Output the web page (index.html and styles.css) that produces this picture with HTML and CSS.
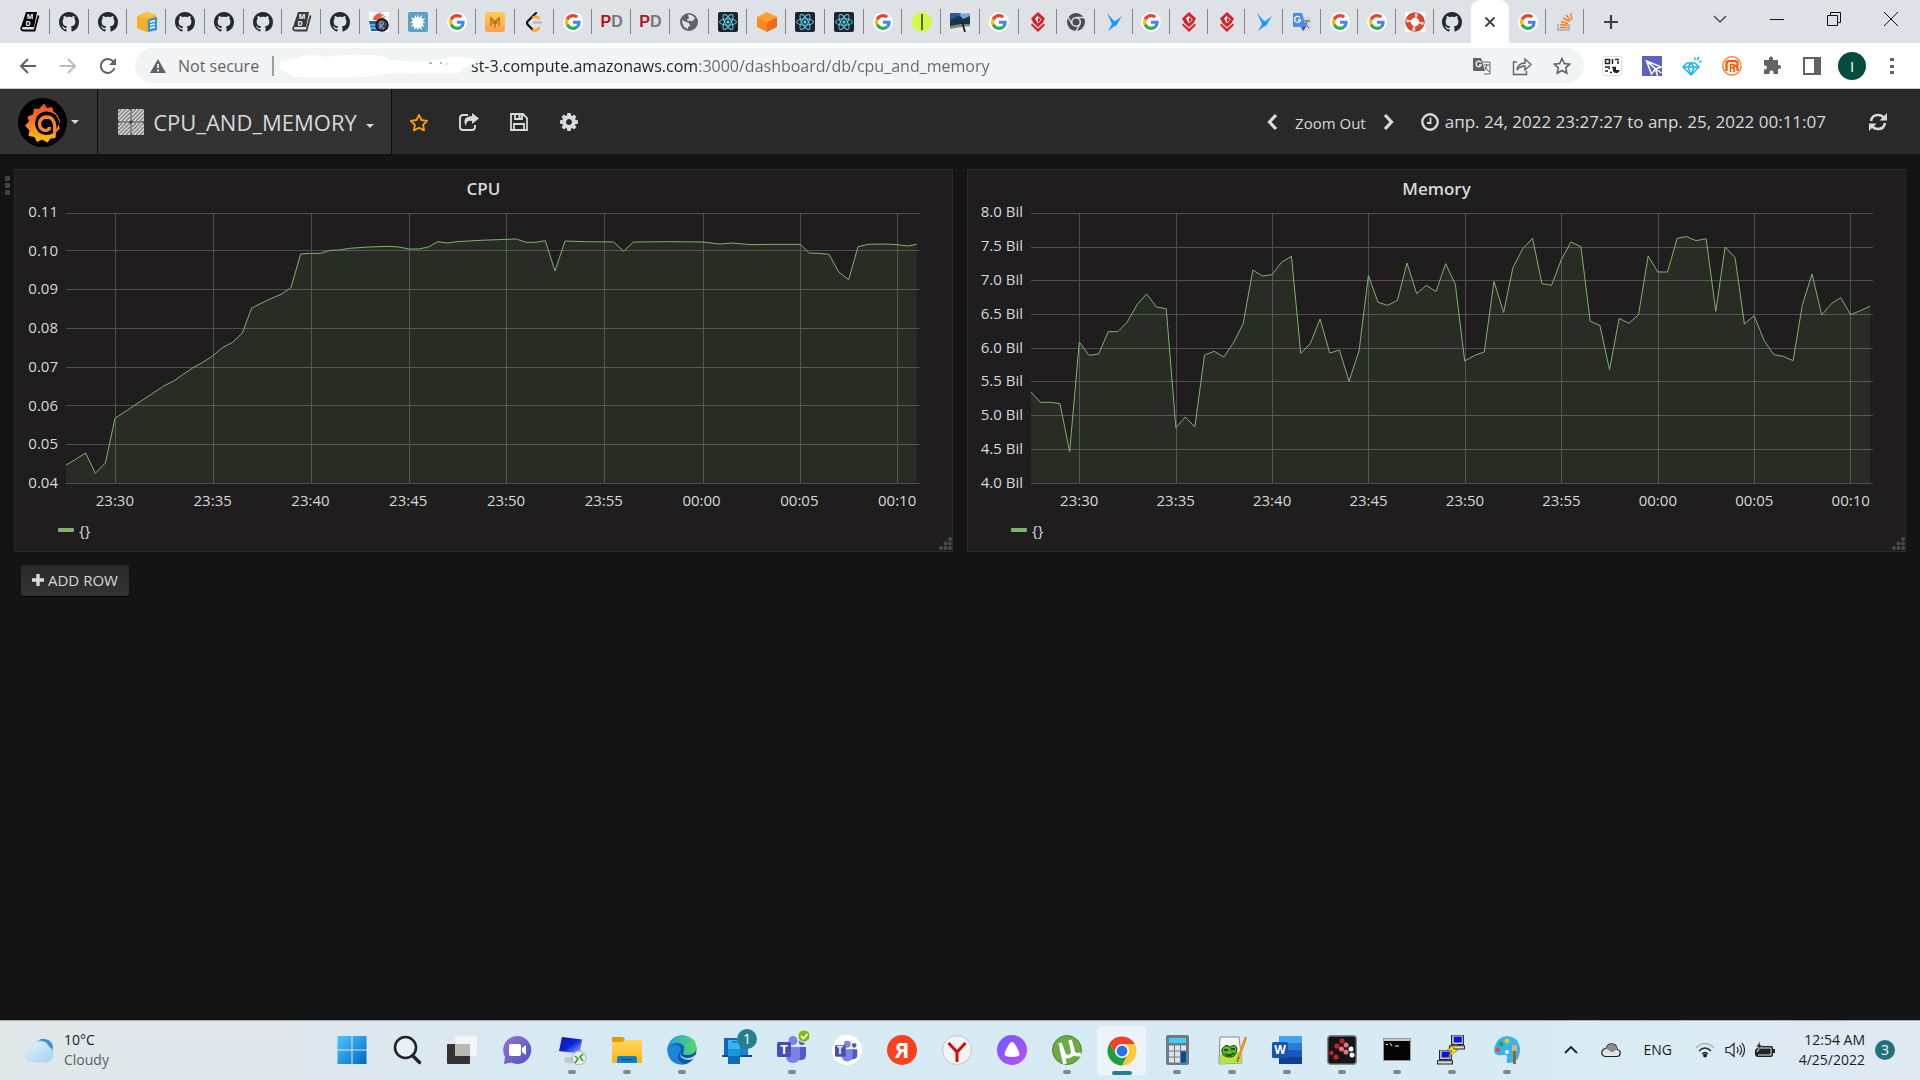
FILE: index.html
```html
<!DOCTYPE html>
<html lang="en">
<head>
<meta charset="utf-8">
<meta name="viewport" content="width=device-width, initial-scale=1">
<title>Grafana - CPU_AND_MEMORY</title>
<link rel="stylesheet" href="styles.css">
</head>
<body>
<svg class="defs" aria-hidden="true">
  <defs>
    <linearGradient id="g-logo" x1="0" y1="0" x2="0" y2="1"><stop offset="0" stop-color="#f0512a"/><stop offset=".45" stop-color="#f5752a"/><stop offset="1" stop-color="#fdc70c"/></linearGradient>
    <linearGradient id="g-m" x1="0" y1="0" x2="0" y2="1"><stop offset="0" stop-color="#fccf55"/><stop offset="1" stop-color="#fba04e"/></linearGradient>
    <linearGradient id="g-win" x1="0" y1="0" x2="1" y2="1"><stop offset="0" stop-color="#4cc8fb"/><stop offset="1" stop-color="#0267c4"/></linearGradient>
    <linearGradient id="g-chat" x1="0" y1="0" x2="1" y2="1"><stop offset="0" stop-color="#9a74c8"/><stop offset="1" stop-color="#4b52c4"/></linearGradient>
    <linearGradient id="g-alice" x1="0" y1="0" x2="1" y2="1"><stop offset="0" stop-color="#6a5cff"/><stop offset="1" stop-color="#c24cf6"/></linearGradient>
    <linearGradient id="g-edge" x1="0" y1="0" x2="1" y2="0"><stop offset="0" stop-color="#1da1e6"/><stop offset="1" stop-color="#58d860"/></linearGradient>
    <linearGradient id="g-screen" x1="0" y1="0" x2="1" y2="1"><stop offset="0" stop-color="#0a18a8"/><stop offset=".5" stop-color="#0a22d8"/><stop offset="1" stop-color="#9fc0ff"/></linearGradient>
    <linearGradient id="g-fold" x1="0" y1="0" x2="0" y2="1"><stop offset="0" stop-color="#ffd862"/><stop offset="1" stop-color="#f9b50c"/></linearGradient>
    <linearGradient id="g-cloud" x1="0" y1="0" x2="1" y2="1"><stop offset="0" stop-color="#e4f5fe"/><stop offset="1" stop-color="#9fd0f2"/></linearGradient>
  </defs>

  <symbol id="f-book" viewBox="0 0 20 20"><path d="M6 0h11l-3 15H1z" fill="currentColor"/><path d="M1.500 15q-1 3.500 2 3.500h11l4-15" fill="none" stroke="currentColor" stroke-width="1.800"/></symbol>
  <symbol id="f-gh" viewBox="0 0 16 16"><path fill="#24292f" d="M8 0C3.580 0 0 3.580 0 8c0 3.540 2.290 6.530 5.470 7.590.4.070.55-.17.55-.38 0-.19-.01-.82-.01-1.490-2.010.37-2.530-.49-2.690-.94-.09-.23-.48-.94-.82-1.130-.28-.15-.68-.52-.01-.53.63-.01 1.080.58 1.230.82.72 1.210 1.870.87 2.330.66.070-.52.28-.87.51-1.070-1.780-.2-3.640-.89-3.640-3.950 0-.87.31-1.590.82-2.150-.08-.2-.36-1.020.08-2.120 0 0 .67-.21 2.200.82.64-.18 1.320-.27 2-.27.68 0 1.360.09 2 .27 1.530-1.040 2.200-.82 2.200-.82.44 1.100.16 1.920.08 2.120.51.56.82 1.270.82 2.150 0 3.070-1.870 3.750-3.650 3.950.29.25.54.73.54 1.480 0 1.070-.01 1.930-.01 2.200 0 .21.15.46.55.38A8.013 8.013 0 0016 8c0-4.420-3.580-8-8-8z"/></symbol>
  <symbol id="f-g" viewBox="0 0 20 20"><circle cx="10" cy="10" r="10" fill="#fff"/><g transform="translate(2 2) scale(.3333)"><path fill="#EA4335" d="M24 9.500c3.540 0 6.710 1.220 9.210 3.600l6.850-6.850C35.900 2.380 30.470 0 24 0 14.620 0 6.510 5.380 2.560 13.220l7.980 6.190C12.430 13.720 17.740 9.500 24 9.500z"/><path fill="#4285F4" d="M46.980 24.550c0-1.570-.15-3.090-.38-4.550H24v9.020h12.940c-.58 2.960-2.260 5.480-4.780 7.180l7.730 6c4.510-4.180 7.090-10.360 7.090-17.650z"/><path fill="#FBBC05" d="M10.530 28.590c-.48-1.450-.76-2.990-.76-4.590s.27-3.140.76-4.590l-7.980-6.190C.92 16.460 0 20.120 0 24c0 3.880.92 7.540 2.560 10.780l7.970-6.190z"/><path fill="#34A853" d="M24 48c6.480 0 11.930-2.130 15.890-5.810l-7.730-6c-2.150 1.450-4.920 2.300-8.160 2.300-6.260 0-11.570-4.220-13.470-9.910l-7.980 6.190C6.510 42.620 14.620 48 24 48z"/></g></symbol>
  <symbol id="f-box" viewBox="0 0 20 20"><path d="M0 4l10-4 9 3v12l-9 5-10-4z" fill="#f2a51f"/><path d="M0 4l10 3 9-4-9-3z" fill="#fac345"/><path d="M0 4l10 3v13L0 16z" fill="#f5b02b"/><path d="M11 8l9-3v13l-9 2z" fill="#2f93e0"/><path d="M13 10l5-1.500M13 13l5-1M13 16l5-1" stroke="#fff" stroke-width="1.500"/></symbol>
  <symbol id="f-java" viewBox="0 0 20 20"><rect width="20" height="20" fill="#fff"/><path d="M0 9h10v10H2z" fill="#1565a8"/><path d="M1 13h6M1 16h8" stroke="#7cc4f4" stroke-width="1.500"/><path d="M4 8q0-5 8-8-2 4 3 2-1 3-6 4 4 0 8-2-3 5-13 4z" fill="#ee5b2b"/><circle cx="13" cy="13" r="6" fill="#33445f" stroke="#111" stroke-width="1.500"/><path d="M11 17v-7h2.500q2 1.500 0 3H11l4 4" fill="none" stroke="#8fa3bf" stroke-width="1.200"/></symbol>
  <symbol id="f-splat" viewBox="0 0 20 20"><rect width="20" height="20" rx="2" fill="#5ba0c2"/><path d="M10 2l1 4 3-3-.5 4 4-1-3 3 3 1.500-3 1 2 3.500-3-1 .5 4-3-2.500-1 3-1.500-3-2.500 2v-3.500l-3 1 2-3.500-3-1 3-1.500-2-3.500 3.500 1 .5-3.500 2 3z" fill="#fff"/></symbol>
  <symbol id="f-m" viewBox="0 0 20 20"><rect width="20" height="20" rx="3" fill="url(#g-m)"/><path d="M6 14V6l4 4 4-4v8M8.500 12V9M11.500 9v3M10 11v5" fill="none" stroke="#c26a10" stroke-width="1.400"/></symbol>
  <symbol id="f-leet" viewBox="0 0 20 20"><path d="M12 1L4 9q-2 2 0 4l5 5" fill="none" stroke="#111" stroke-width="2.200" stroke-linecap="round"/><path d="M9 10.500h9" stroke="#b3b3b3" stroke-width="2"/><path d="M9 5.500q3-2 6 1M9 18q3 2 6-2" fill="none" stroke="#ffa116" stroke-width="2.200" stroke-linecap="round"/></symbol>
  <symbol id="f-globe" viewBox="0 0 20 20"><circle cx="10" cy="10" r="9" fill="#5f6368"/><path d="M9 2.500q5 0 7 4l-3 3-2-1-2 1-1-2 2-1zM3 8l4 2 3 1 1 3-2 1v2Q3 15 3 8z" fill="#dee1e6"/></symbol>
  <symbol id="f-react" viewBox="0 0 20 20"><rect width="20" height="20" rx="2" fill="#20232a"/><g fill="none" stroke="#61dafb" stroke-width=".9"><ellipse cx="10" cy="10" rx="8.500" ry="3.200"/><ellipse cx="10" cy="10" rx="8.500" ry="3.200" transform="rotate(60 10 10)"/><ellipse cx="10" cy="10" rx="8.500" ry="3.200" transform="rotate(120 10 10)"/></g><circle cx="10" cy="10" r="1.600" fill="#61dafb"/></symbol>
  <symbol id="f-cube" viewBox="0 0 20 20"><path d="M10 0l10 5-10 5L0 5z" fill="#ff9d2e"/><path d="M0 5l10 5v10L0 15z" fill="#f78b1f"/><path d="M20 5l-10 5v10l10-5z" fill="#ee6b1e"/></symbol>
  <symbol id="f-ball" viewBox="0 0 20 20"><circle cx="10" cy="10" r="10" fill="#d2fa42"/><path d="M10 2v16" stroke="#3f5763" stroke-width="1.800"/></symbol>
  <symbol id="f-photo" viewBox="0 0 20 20"><rect width="20" height="20" fill="#e3e9ef"/><path d="M0 1h11v6L0 10z" fill="#2d5a9a"/><path d="M0 8l8-4 7 2 5-3v9l-8 2-12 1z" fill="#1c3350"/><path d="M9 2l11-1v3l-7 3z" fill="#7ea6cf"/><path d="M0 14l11-2 9 0v2l-9 1-11 2z" fill="#6d8f72"/><path d="M12 10l3 10" stroke="#222" stroke-width="1.800"/></symbol>
  <symbol id="f-dia" viewBox="0 0 20 20"><path d="M10 0l7 6.500-2 3.500 2 3-7 7-7-7 2-3-2-3.500z" fill="#d3222a"/><path d="M4 10.500l6 5.500 6-5.500" fill="none" stroke="#f3dfe2" stroke-width="1.200"/><path d="M7 6.500l3-3v8z" fill="#fff"/><path d="M10 5l3.500 2.500L10 11" fill="none" stroke="#f3dfe2"/></symbol>
  <symbol id="f-chr" viewBox="0 0 20 20"><circle cx="10" cy="10" r="9" fill="#4a4d51"/><circle cx="10" cy="10" r="4.300" fill="#4a4d51" stroke="#dee1e6" stroke-width="1.600"/><path d="M10 5.500h9M6 12L2 5M14 12l-4.500 8" stroke="#dee1e6" stroke-width="1.400"/></symbol>
  <symbol id="f-bird" viewBox="0 0 20 20"><path d="M3 1l7 8 1.500 0 6.500-5-4 6.500q-1 3.500-4 4l-6 4.500 4-7z" fill="#1e98ff"/></symbol>
  <symbol id="f-tr" viewBox="0 0 20 20"><path d="M8 5h11v14h-9z" fill="#d5d7da"/><path d="M1 1h9l4 14H1z" fill="#4a8af4"/><path d="M9 15h5l-3 4z" fill="#2a56c6"/><path d="M8 5.500A3 3 0 108.500 8H6" fill="none" stroke="#fff" stroke-width="1.300"/><path d="M12 9h6M15 8v1q0 4-2 6M13 11l4 5" stroke="#5c6470" fill="none"/></symbol>
  <symbol id="f-life" viewBox="0 0 20 20"><rect width="20" height="20" fill="#fff"/><circle cx="10" cy="10" r="6.800" fill="none" stroke="#f0d8d0" stroke-width="5"/><circle cx="10" cy="10" r="6.800" fill="none" stroke="#e2472e" stroke-width="5" stroke-dasharray="8 2.680" transform="rotate(20 10 10)"/><circle cx="10" cy="10" r="9.300" fill="none" stroke="#8c2c20" stroke-width=".7"/></symbol>
  <symbol id="f-so" viewBox="0 0 20 20"><path d="M3 12v6h11v-6" fill="none" stroke="#a9abae" stroke-width="1.600"/><path d="M5 15.500h7.500M5.200 12.500l7.500.8M6 9.500l7 2M8 6l6.500 3.500M11 3l4.500 5.500M15.500 1l1.500 6.500" stroke="#f48024" stroke-width="1.500"/></symbol>

  <symbol id="i-teams" viewBox="0 0 30 30"><circle cx="16" cy="5.500" r="4.500" fill="#7b83eb"/><circle cx="25" cy="7" r="3" fill="#5059c9"/><path d="M20 12h9v8q0 5-5 5h-4z" fill="#5059c9"/><path d="M9 12h14v9q0 7-7 7t-7-7z" fill="#7b83eb"/><rect y="7" width="14" height="15" rx="1.500" fill="#464eb8"/></symbol>
  <symbol id="i-monitor" viewBox="0 0 16 14"><path d="M2 0h11v9H2z" fill="#c9c9c9" stroke="#222"/><path d="M4 1.500h7.500v5.500H4z" fill="#0b11e8"/><path d="M0 10h14v3H0z" fill="#dcdcdc" stroke="#222"/></symbol>
</svg>

<header class="browser">
  <div class="tabstrip">
    <nav class="tabs" aria-label="Tabs">
      <div class="tab-group wide">
        <span class="tab"><svg class="fav" viewBox="0 0 20 20"><use href="#f-book"/><text x="10" y="7">M</text><text x="8" y="14">D</text></svg></span>
        <span class="tab"><svg class="fav"><use href="#f-gh"/></svg></span>
        <span class="tab"><svg class="fav"><use href="#f-gh"/></svg></span>
        <span class="tab"><svg class="fav"><use href="#f-box"/></svg></span>
        <span class="tab"><svg class="fav"><use href="#f-gh"/></svg></span>
        <span class="tab"><svg class="fav"><use href="#f-gh"/></svg></span>
        <span class="tab"><svg class="fav"><use href="#f-gh"/></svg></span>
        <span class="tab"><svg class="fav soft" viewBox="0 0 20 20"><use href="#f-book"/><text x="10" y="7">M</text><text x="8" y="14">D</text></svg></span>
        <span class="tab"><svg class="fav"><use href="#f-gh"/></svg></span>
        <span class="tab"><svg class="fav"><use href="#f-java"/></svg></span>
        <span class="tab"><svg class="fav"><use href="#f-splat"/></svg></span>
        <span class="tab"><svg class="fav"><use href="#f-g"/></svg></span>
        <span class="tab"><svg class="fav"><use href="#f-m"/></svg></span>
        <span class="tab"><svg class="fav"><use href="#f-leet"/></svg></span>
        <span class="tab"><svg class="fav"><use href="#f-g"/></svg></span>
        <span class="tab pd"><b>P</b>D</span>
        <span class="tab pd"><b>P</b>D</span>
        <span class="tab"><svg class="fav"><use href="#f-globe"/></svg></span>
        <span class="tab"><svg class="fav"><use href="#f-react"/></svg></span>
        <span class="tab"><svg class="fav"><use href="#f-cube"/></svg></span>
        <span class="tab"><svg class="fav"><use href="#f-react"/></svg></span>
        <span class="tab"><svg class="fav"><use href="#f-react"/></svg></span>
        <span class="tab"><svg class="fav"><use href="#f-g"/></svg></span>
        <span class="tab"><svg class="fav"><use href="#f-ball"/></svg></span>
        <span class="tab"><svg class="fav"><use href="#f-photo"/></svg></span>
        <span class="tab"><svg class="fav"><use href="#f-g"/></svg></span>
        <span class="tab"><svg class="fav"><use href="#f-dia"/></svg></span>
      </div>
      <div class="tab-group">
        <span class="tab"><svg class="fav"><use href="#f-chr"/></svg></span>
        <span class="tab"><svg class="fav"><use href="#f-bird"/></svg></span>
        <span class="tab"><svg class="fav"><use href="#f-g"/></svg></span>
        <span class="tab"><svg class="fav"><use href="#f-dia"/></svg></span>
        <span class="tab"><svg class="fav"><use href="#f-dia"/></svg></span>
        <span class="tab"><svg class="fav"><use href="#f-bird"/></svg></span>
        <span class="tab"><svg class="fav"><use href="#f-tr"/></svg></span>
        <span class="tab"><svg class="fav"><use href="#f-g"/></svg></span>
        <span class="tab"><svg class="fav"><use href="#f-g"/></svg></span>
        <span class="tab"><svg class="fav"><use href="#f-life"/></svg></span>
        <span class="tab bare"><svg class="fav"><use href="#f-gh"/></svg></span>
        <span class="tab active"><button class="plain" aria-label="Close tab"><svg width="12" height="12" viewBox="0 0 12 12"><path d="M1.500 1.500l9 9M10.500 1.500l-9 9" stroke="#3c4043" stroke-width="1.800"/></svg></button></span>
        <span class="tab"><svg class="fav"><use href="#f-g"/></svg></span>
        <span class="tab"><svg class="fav"><use href="#f-so"/></svg></span>
      </div>
    </nav>
    <button class="plain new-tab" aria-label="New tab"><svg width="16" height="16" viewBox="0 0 16 16"><path d="M8 1v14M1 8h14" stroke="#3c4043" stroke-width="2.200"/></svg></button>
    <div class="window-buttons">
      <button class="plain" aria-label="Search tabs"><svg width="14" height="14" viewBox="0 0 14 14"><path d="M1 4l6 6 6-6" fill="none" stroke="#333" stroke-width="1.200"/></svg></button>
      <button class="plain" aria-label="Minimize"><svg width="14" height="14" viewBox="0 0 14 14"><path d="M0 7.500h14" stroke="#111"/></svg></button>
      <button class="plain" aria-label="Restore"><svg width="14" height="14" viewBox="0 0 14 14"><path d="M.5 3.500h10v10H.5zM3.500 3V.5h10v10H11" fill="none" stroke="#111"/></svg></button>
      <button class="plain" aria-label="Close"><svg width="14" height="14" viewBox="0 0 14 14"><path d="M0 0l14 14M14 0L0 14" stroke="#111"/></svg></button>
    </div>
  </div>

  <div class="toolbar">
    <div class="nav-buttons">
      <button class="plain" aria-label="Back"><svg width="18" height="18" viewBox="0 0 18 18"><path d="M17 9H2M9 2L2 9l7 7" fill="none" stroke="#5f6368" stroke-width="2"/></svg></button>
      <button class="plain" aria-label="Forward" disabled><svg width="18" height="18" viewBox="0 0 18 18"><path d="M1 9h15M9 2l7 7-7 7" fill="none" stroke="#babcbe" stroke-width="2"/></svg></button>
      <button class="plain" aria-label="Reload"><svg width="18" height="18" viewBox="0 0 18 18"><path d="M15.500 11A7 7 0 1 1 14 4.200l1.500 1.500" fill="none" stroke="#5f6368" stroke-width="2"/><path d="M17 1v7h-7z" fill="#5f6368"/></svg></button>
    </div>
    <div class="omnibox">
      <svg class="warn" width="16" height="14" viewBox="0 0 16 14"><path d="M8 0l8 14H0z" fill="#5f6368"/><path d="M8 5v4M8 10.500v2" stroke="#f1f3f4" stroke-width="1.800"/></svg>
      <label class="secure" for="url">Not secure</label>
      <span class="divider"></span>
      <div class="url-field">
        <input id="url" class="url" type="text" value="st-3.compute.amazonaws.com:3000/dashboard/db/cpu_and_memory">
        <svg class="smudge" width="198" height="24" viewBox="0 0 198 24"><path d="M2 7q14-1 20-5 14-2 26 1 14-3 40-2 18 0 22 5 20 2 40 1 15-2 20-4 14-1 27 2v5q-10 1-17 9-30 1-60 0-16 1-32 4-40 1-72 0-6-4-14-7-3-5 0-9z" fill="#fff"/><path d="M150 9h3M161 9h2M167 10h1" stroke="#70757a"/></svg>
      </div>
      <div class="omni-actions">
        <button class="plain" aria-label="Translate"><svg width="18" height="18" viewBox="0 0 18 18"><path d="M9 5h8v12h-6" fill="none" stroke="#5f6368"/><path d="M0 1h8l4 13H1q-1 0-1-1z" fill="#5f6368"/><path d="M8 5.500A2.700 2.700 0 1 0 8.200 8H6" fill="none" stroke="#f1f3f4" stroke-width="1.300"/><path d="M10.500 8h6M13.500 7v1q0 3-2 5M12 10l4 5" fill="none" stroke="#5f6368"/></svg></button>
        <button class="plain" aria-label="Share"><svg width="20" height="20" viewBox="0 0 20 20"><path d="M5 6H1.500v12.500h13V15M5 14q1-7 8-7V3l6 5.500-6 5.500v-4q-5 0-8 4z" fill="none" stroke="#5f6368" stroke-width="1.400"/></svg></button>
        <button class="plain" aria-label="Bookmark"><svg width="18" height="18" viewBox="0 0 18 18"><path d="M9 1.500l2.300 5 5.400.6-4 3.700 1.100 5.400L9 13.500l-4.800 2.700 1.100-5.400-4-3.700 5.400-.6z" fill="none" stroke="#5f6368" stroke-width="1.600"/></svg></button>
      </div>
    </div>
    <div class="extensions">
      <button class="plain" aria-label="QR code"><svg width="20" height="20" viewBox="0 0 20 20"><rect x=".5" y=".5" width="19" height="19" rx="2" fill="#fff" stroke="#dcdcdc"/><path d="M3.500 3.500h4v4h-4zM10.500 3v5M13 3.500h4M16 5v3M3 11h3M7 10v3M3 15h3M8 16.500h2M10 11.500h2" fill="none" stroke="#222" stroke-width="1.500"/><path d="M14 10.500a3.300 3.300 0 1 0 3.500 3.500H14z" fill="#222"/></svg></button>
      <button class="plain" aria-label="Send"><svg width="20" height="20" viewBox="0 0 20 20"><rect width="20" height="20" fill="#5a62bd"/><path d="M4.500 5l15 6-6 2-4 5zM4.500 5l9 8 2 7M13.500 13l6 4" fill="none" stroke="#fff" stroke-width="1.500"/></svg></button>
      <button class="plain" aria-label="Gem"><svg width="20" height="20" viewBox="0 0 20 20"><path d="M5 7h8l4 4-8 8-8-8zM1 11h16M6 11l3 8 3-8-3-4zM12.500 1.500l.7 2.500M17 1l-2 3M19.500 5L17 6" fill="none" stroke="#1bb6f5" stroke-width="1.500"/></svg></button>
      <button class="plain" aria-label="Extension"><svg width="20" height="20" viewBox="0 0 20 20"><circle cx="10" cy="10" r="9.200" fill="#fff" stroke="#ff8136" stroke-width="1.400"/><path d="M4.500 15V8q0-3 3-3h5q4 0 3 4-.5 1-1 1 1.500 1 1 5" fill="none" stroke="#ff5a00" stroke-width="2.400"/><path d="M8.500 16V8.500h3q1.500 1.500 0 3h-3 2.500q1.500 1 1 4.500" fill="none" stroke="#ff5a00" stroke-width="1.700"/></svg></button>
      <button class="plain" aria-label="Extensions"><svg width="20" height="20" viewBox="0 0 20 20"><path d="M2 4h5q-.5-3.500 2-3.500T11 4h5v5q3-.5 3 2t-3 2v5h-4.500q.5-3.500-2-3.500t-2 3.500H2v-4.500q3 .5 3-2t-3-2z" fill="#5f6368"/></svg></button>
      <button class="plain" aria-label="Side panel"><svg width="18" height="18" viewBox="0 0 18 18"><path d="M1 1h16v16H1z" fill="#fff" stroke="#5f6368" stroke-width="2"/><path d="M11 1h6v16h-6z" fill="#5f6368"/></svg></button>
      <button class="plain avatar" aria-label="Profile">I</button>
      <button class="plain" aria-label="Menu"><svg width="4" height="18" viewBox="0 0 4 18"><path d="M0 1h4v3H0zM0 8h4v3H0zM0 14h4v3H0z" fill="#5f6368"/></svg></button>
    </div>
  </div>
</header>

<main class="app">
  <div class="navbar">
    <button class="plain brand" aria-label="Main menu">
      <svg width="49" height="49" viewBox="0 0 49 49"><circle cx="24.500" cy="24.500" r="24.500" fill="#000"/><path d="M26 5.500l3 4.500 5-1 1.500 4.500q4 2 6.500 10l-1 3 .5 4.500-3.500 3-.5 6-5 .5-3 4-5.500-3-5 2.500-2.500-5-6-1 1-5.500-4.500-5 4-4-1.500-5 5.500-2 1-6 5 .5z" fill="url(#g-logo)"/><path d="M41.500 25Q39 14 29 13.500 17.500 14 17 26q1 10 11 11 9 0 11-7z" fill="#000"/><path d="M36.500 35.500Q38.500 19 28.500 19q-7.500.5-7 8 1 5.500 7 5.500 3-1 3-3.500" fill="none" stroke="#f7862a" stroke-width="3.400"/><path d="M32.500 26q-3-4-6 0-1 4 2.500 4" fill="none" stroke="#000" stroke-width="2"/></svg>
      <i class="caret"></i>
    </button>
    <button class="plain dash-title">
      <svg width="26" height="26" viewBox="0 0 26 26"><g fill="#d4d4d4"><rect width="12.500" height="12.500" rx="1.500"/><rect x="13.500" width="12.500" height="12.500" rx="1.500"/><rect y="13.500" width="12.500" height="12.500" rx="1.500"/><rect x="13.500" y="13.500" width="12.500" height="12.500" rx="1.500"/></g><path d="M0 4l4-4M0 8l8-8M0 12L12 0M4 12l8-8M8 12l4-4M14 4l4-4M14 8l8-8M14 12L26 0M18 12l8-8M22 12l4-4M0 18l4-4M0 22l8-8M0 26l12-12M4 26l8-8M8 26l4-4M14 18l4-4M14 22l8-8M14 26l12-12M18 26l8-8M22 26l4-4" stroke="#777" stroke-width="1.100"/></svg>
      <span class="title-text">CPU_AND_MEMORY</span>
      <i class="caret low"></i>
    </button>
    <div class="dash-actions">
      <button class="plain" aria-label="Star"><svg width="20" height="19" viewBox="0 0 20 19"><path d="M10 1.800l2.500 5.200 5.700.8-4.100 4 1 5.600-5.100-2.700-5.100 2.700 1-5.600-4.100-4 5.700-.8z" fill="none" stroke="#ff9d0a" stroke-width="1.800" stroke-linejoin="round"/></svg></button>
      <button class="plain" aria-label="Share dashboard"><svg width="20" height="18" viewBox="0 0 20 18"><path d="M9 2H4Q1 2 1 5v9q0 3 3 3h9q3 0 3-3v-2" fill="none" stroke="#d8d9da" stroke-width="1.900"/><path d="M13 0l7 5.500-7 5.500V8q-6-1-6 5-5-9 6-10z" fill="#d8d9da"/></svg></button>
      <button class="plain" aria-label="Save dashboard"><svg width="18" height="18" viewBox="0 0 18 18"><path d="M1 1h12l4 4v12H1zM5 1v5h7V1M4 17v-6h10v6" fill="none" stroke="#d8d9da" stroke-width="1.800"/><path d="M8.500 1.500h2v3.500h-2z" fill="#d8d9da"/></svg></button>
      <button class="plain" aria-label="Settings"><svg width="18" height="18" viewBox="0 128 1536 1536"><path fill="#d8d9da" fill-rule="evenodd" d="M1024 896q0 106-75 181t-181 75-181-75-75-181 75-181 181-75 181 75 75 181zm512-109v222q0 12-8 23t-20 13l-185 28q-19 54-39 91 35 50 107 138 10 12 10 25t-9 23q-27 37-99 108t-94 71q-12 0-26-9l-138-108q-44 23-91 38-16 136-29 186-7 28-36 28H657q-14 0-24.500-8.500T621 1634l-28-184q-49-16-90-37l-141 107q-10 9-25 9-14 0-25-11-126-114-165-168-7-10-7-23 0-12 8-23 15-21 51-66.500t54-70.500q-27-50-41-99L29 1041q-13-2-21-12.500T0 1005V783q0-12 8-23t19-13l186-28q14-46 39-92-40-57-107-138-10-12-10-24 0-10 9-23 26-36 98.500-107.500T337 263q13 0 26 10l138 107q44-23 91-38 16-136 29-186 7-28 36-28h222q14 0 24.500 8.500T915 158l28 184q49 16 90 37l142-107q9-9 24-9 13 0 25 10 129 119 165 170 7 8 7 22 0 12-8 23-15 21-51 66.500t-54 70.500q26 50 41 98l183 28q13 2 21 12.500t8 23.500z"/></svg></button>
    </div>
    <div class="time-controls">
      <button class="plain" aria-label="Earlier"><svg width="12" height="18" viewBox="0 0 12 18"><path d="M10 2L3.500 9l6.500 7" fill="none" stroke="#d8d9da" stroke-width="3.200"/></svg></button>
      <button class="plain zoom">Zoom Out</button>
      <button class="plain" aria-label="Later"><svg width="12" height="18" viewBox="0 0 12 18"><path d="M2 2l6.500 7L2 16" fill="none" stroke="#d8d9da" stroke-width="3.200"/></svg></button>
      <button class="plain range"><svg width="18" height="18" viewBox="0 0 18 18"><circle cx="9" cy="9" r="7.700" fill="none" stroke="#d8d9da" stroke-width="2.400"/><path d="M9.500 4.500v5.500H6" fill="none" stroke="#d8d9da" stroke-width="1.800"/></svg>апр. 24, 2022 23:27:27 to апр. 25, 2022 00:11:07</button>
      <button class="plain refresh" aria-label="Refresh"><svg width="18" height="18" viewBox="0 0 18 18"><path d="M2 8q1-6 7-6 4 0 6 3M16 10q-1 6-7 6-4 0-6-3" fill="none" stroke="#d8d9da" stroke-width="2.600"/><path d="M18 0v7.500h-7.500zM0 18v-7.500h7.500z" fill="#d8d9da"/></svg></button>
    </div>
  </div>

  <section class="row">
    <button class="plain row-handle" aria-label="Row menu"><i></i><i></i><i></i></button>
    <div class="panels">
      <article class="panel cpu">
        <h2 class="panel-title">CPU</h2>
        <div class="chart">
          <div class="y-axis"><span>0.11</span><span>0.10</span><span>0.09</span><span>0.08</span><span>0.07</span><span>0.06</span><span>0.05</span><span>0.04</span></div>
          <svg class="plot" viewBox="197 161 2562 810" preserveAspectRatio="none" role="img" aria-label="CPU usage over time">
            <path class="area" d="M197 971V917L226 900 256 881 285 942 315 911 344 777 490 680 520 665 578 625 607 609 637 590 666 565 697 549 726 521 754 446 813 417 842 405 872 385 901 284 930 282 960 282 989 273 1018 272 1047 267 1106 263 1165 261 1195 263 1225 269 1255 269 1284 263 1312 247 1341 251 1370 247 1440 243 1518 240 1548 239 1577 249 1606 249 1635 244 1664 335 1694 245 1752 247 1840 248 1870 276 1899 248 2010 247 2105 248 2160 254 2195 251 2252 256 2320 255 2400 255 2427 281 2457 282 2486 285 2515 338 2545 361 2573 262 2603 255 2655 254 2690 256 2723 260 2749 255V971z"/>
            <path class="grid" d="M197 161H2759M197 274H2759M197 390H2759M197 506H2759M197 623H2759M197 739H2759M197 855H2759M197 971H2759M345 161V971M638 161V971M934 161V971M1226 161V971M1519 161V971M1811 161V971M2108 161V971M2400 161V971M2692 161V971"/>
            <path class="line" d="M197 917L226 900 256 881 285 942 315 911 344 777 490 680 520 665 578 625 607 609 637 590 666 565 697 549 726 521 754 446 813 417 842 405 872 385 901 284 930 282 960 282 989 273 1018 272 1047 267 1106 263 1165 261 1195 263 1225 269 1255 269 1284 263 1312 247 1341 251 1370 247 1440 243 1518 240 1548 239 1577 249 1606 249 1635 244 1664 335 1694 245 1752 247 1840 248 1870 276 1899 248 2010 247 2105 248 2160 254 2195 251 2252 256 2320 255 2400 255 2427 281 2457 282 2486 285 2515 338 2545 361 2573 262 2603 255 2655 254 2690 256 2723 260 2749 255"/>
          </svg>
          <div class="x-axis"><span>23:30</span><span>23:35</span><span>23:40</span><span>23:45</span><span>23:50</span><span>23:55</span><span>00:00</span><span>00:05</span><span>00:10</span></div>
        </div>
        <div class="legend"><i></i><a href="#cpu">{}</a></div>
        <svg class="resize" width="13" height="13" viewBox="0 0 13 13"><g fill="#4a4a4a"><circle cx="11" cy="2" r="2"/><circle cx="11" cy="6.500" r="2"/><circle cx="6.500" cy="6.500" r="2"/><circle cx="11" cy="11" r="2"/><circle cx="6.500" cy="11" r="2"/><circle cx="2" cy="11" r="2"/></g></svg>
      </article>
      <article class="panel memory">
        <h2 class="panel-title">Memory</h2>
        <div class="chart">
          <div class="y-axis"><span>8.0 Bil</span><span>7.5 Bil</span><span>7.0 Bil</span><span>6.5 Bil</span><span>6.0 Bil</span><span>5.5 Bil</span><span>5.0 Bil</span><span>4.5 Bil</span><span>4.0 Bil</span></div>
          <svg class="plot" viewBox="210 161 2528 810" preserveAspectRatio="none" role="img" aria-label="Memory usage over time">
            <path class="area" d="M210 971V698L238 729 270 729 297 733 326 877 355 548 384 588 413 584 442 517 471 517 499 488 529 435 557 404 587 443 616 448 645 805 673 773 702 803 731 587 760 576 789 593 818 550 847 493 876 332 905 350 934 346 963 308 992 291 1020 582 1049 552 1078 479 1107 581 1136 572 1165 666 1195 574 1223 349 1252 429 1281 438 1310 423 1339 311 1368 403 1397 378 1426 397 1455 313 1484 375 1512 605 1542 588 1571 578 1600 366 1629 459 1657 325 1687 267 1716 237 1744 373 1773 378 1802 301 1831 248 1861 262 1889 486 1918 498 1947 631 1976 477 2005 492 2034 466 2063 290 2092 338 2121 338 2150 237 2178 232 2207 244 2237 238 2266 456 2294 263 2324 295 2352 494 2381 469 2411 543 2440 586 2468 591 2498 604 2526 436 2555 344 2584 467 2614 432 2641 415 2671 466 2700 454 2729 441V971z"/>
            <path class="grid" d="M210 161H2738M210 263H2738M210 364H2738M210 465H2738M210 566H2738M210 667H2738M210 769H2738M210 870H2738M210 971H2738M357 161V971M646 161V971M935 161V971M1223 161V971M1516 161V971M1804 161V971M2094 161V971M2382 161V971M2671 161V971"/>
            <path class="line" d="M210 698L238 729 270 729 297 733 326 877 355 548 384 588 413 584 442 517 471 517 499 488 529 435 557 404 587 443 616 448 645 805 673 773 702 803 731 587 760 576 789 593 818 550 847 493 876 332 905 350 934 346 963 308 992 291 1020 582 1049 552 1078 479 1107 581 1136 572 1165 666 1195 574 1223 349 1252 429 1281 438 1310 423 1339 311 1368 403 1397 378 1426 397 1455 313 1484 375 1512 605 1542 588 1571 578 1600 366 1629 459 1657 325 1687 267 1716 237 1744 373 1773 378 1802 301 1831 248 1861 262 1889 486 1918 498 1947 631 1976 477 2005 492 2034 466 2063 290 2092 338 2121 338 2150 237 2178 232 2207 244 2237 238 2266 456 2294 263 2324 295 2352 494 2381 469 2411 543 2440 586 2468 591 2498 604 2526 436 2555 344 2584 467 2614 432 2641 415 2671 466 2700 454 2729 441"/>
          </svg>
          <div class="x-axis"><span>23:30</span><span>23:35</span><span>23:40</span><span>23:45</span><span>23:50</span><span>23:55</span><span>00:00</span><span>00:05</span><span>00:10</span></div>
        </div>
        <div class="legend"><i></i><a href="#memory">{}</a></div>
        <svg class="resize" width="13" height="13" viewBox="0 0 13 13"><g fill="#4a4a4a"><circle cx="11" cy="2" r="2"/><circle cx="11" cy="6.500" r="2"/><circle cx="6.500" cy="6.500" r="2"/><circle cx="11" cy="11" r="2"/><circle cx="6.500" cy="11" r="2"/><circle cx="2" cy="11" r="2"/></g></svg>
      </article>
    </div>
  </section>
  <button class="plain add-row"><svg width="12" height="12" viewBox="0 0 12 12"><path d="M6 0v12M0 6h12" stroke="#d8d9da" stroke-width="3.400"/></svg>ADD ROW</button>
</main>

<footer class="taskbar">
  <button class="plain weather">
    <svg width="30" height="26" viewBox="0 0 30 26"><path d="M12 6q2-5 8-4 7 1 8 8v6z" fill="#3f8fd6"/><path d="M8 25q-7 0-7-6 0-5 5-6 1-9 9-9 7 0 9 6 5 2 4 8-1 7-7 7z" fill="url(#g-cloud)" stroke="#b4d3e8" stroke-width=".6"/></svg>
    <span class="weather-text"><span>10°C</span><span class="dim">Cloudy</span></span>
  </button>
  <div class="task-apps">
    <button class="plain app-btn" aria-label="Start"><svg width="30" height="30" viewBox="0 0 30 30"><path d="M.5 1h14v13.500H.5zM15.500 1h14v13.500h-14zM.5 15.500h14V29H.5zM15.500 15.500h14V29h-14z" fill="url(#g-win)"/></svg></button>
    <button class="plain app-btn" aria-label="Search"><svg width="30" height="30" viewBox="0 0 30 30"><circle cx="13.500" cy="12.500" r="10.500" fill="#e8f1f5" stroke="#242424" stroke-width="2.600"/><path d="M20.500 20.500l7 7" stroke="#242424" stroke-width="3.400" stroke-linecap="round"/></svg></button>
    <button class="plain app-btn" aria-label="Task view"><svg width="30" height="30" viewBox="0 0 30 30"><rect y="9" width="23" height="20" rx="1" fill="#333"/><rect x="8" y="1" width="22" height="20" rx="1" fill="#f4f4f4"/><path d="M8 9h15v12H8z" fill="#b9bab8"/></svg></button>
    <button class="plain app-btn" aria-label="Chat"><svg width="30" height="30" viewBox="0 0 30 30"><path d="M15 1a14 14 0 1 1-6 26.500L2 29l1-7A14 14 0 0 1 15 1z" fill="url(#g-chat)"/><rect x="7" y="9" width="12" height="12" rx="2" fill="#fff"/><path d="M20 13l4-3v10l-4-3z" fill="#fff"/></svg></button>
    <button class="plain app-btn running" aria-label="Remote Desktop"><svg width="30" height="30" viewBox="0 0 30 30"><path d="M8 22h11l3 5q-8 3-15 0z" fill="#c4c8cd"/><path d="M3 0l24 3-3 18L0 18z" fill="#dfe3e8"/><path d="M5 2l20 2.500-2.500 14L2 16z" fill="url(#g-screen)"/><circle cx="22" cy="23" r="7" fill="#e9ecec" stroke="#aaa"/><path d="M18 21l3 3-3 4M26 19l-3 3 3 4" fill="none" stroke="#2f9e36" stroke-width="1.600"/></svg></button>
    <button class="plain app-btn running" aria-label="File Explorer"><svg width="30" height="30" viewBox="0 0 30 30"><path d="M0 2h11l3 4h-3v6H0z" fill="#e09c06"/><path d="M0 7h10l3-2h17v23H0z" fill="url(#g-fold)"/><path d="M5 28v-5q0-2 2-2h16q2 0 2 2v5z" fill="#1081d2"/><path d="M9 24.500h12" stroke="#0b4f8a" stroke-width="1.300"/></svg></button>
    <button class="plain app-btn running" aria-label="Edge"><svg width="30" height="30" viewBox="0 0 30 30"><circle cx="15" cy="15" r="14.500" fill="#0d5ba6"/><path d="M.5 14Q3 .5 15 .5 29 1 29.500 13q-1 7-9 7-6 0-4-3 3-8-6-9Q3 8 .5 14z" fill="url(#g-edge)"/><path d="M.5 14q4-6 10-4 5 2 3 6-7 9 4 13Q1 31 .5 14z" fill="#1b86d8"/><path d="M13.500 16q-2 5 4.500 7 6 1 10-3 1 0 1 1-2 2-3 3-8 2-12-2-2-3-.5-6z" fill="#dcecf4"/></svg></button>
    <button class="plain app-btn" aria-label="Phone"><svg width="30" height="30" viewBox="0 0 30 30"><path d="M2 3h13v19H2z" fill="#1466b8"/><path d="M0 20h30v2H0z" fill="#0d4f94"/><path d="M16 6h10v14H16z" fill="#1d7fd0"/><path d="M6 5h12v24H6z" fill="#32b8f0"/><path d="M6 14h12v7H6z" fill="#1c94dc"/><path d="M6 21h12v8H6z" fill="#0f6cba"/><path d="M10 7h5" stroke="#0d4f94"/></svg><span class="count">1</span></button>
    <button class="plain app-btn running" aria-label="Teams work"><svg width="30" height="30" viewBox="0 0 30 30"><use href="#i-teams"/><text x="7" y="19" font-size="13">T</text></svg><span class="check"><svg width="14" height="14" viewBox="0 0 14 14"><circle cx="7" cy="7" r="6.300" fill="#84b81c" stroke="#fff"/><path d="M4 7l2.500 2.500L10.500 5" fill="none" stroke="#fff" stroke-width="1.800"/></svg></span></button>
    <button class="plain app-btn" aria-label="Teams"><svg width="30" height="30" viewBox="0 0 30 30"><circle cx="15" cy="15" r="15" fill="#fff"/><use href="#i-teams" x="3" y="5" width="23" height="23"/><text x="8" y="19" font-size="10">T</text></svg></button>
    <button class="plain app-btn" aria-label="Yandex"><svg width="30" height="30" viewBox="0 0 30 30"><circle cx="15" cy="15" r="15" fill="#fc3f1d"/><text x="15" y="23" font-size="22">Я</text></svg></button>
    <button class="plain app-btn" aria-label="Yandex Browser"><svg width="30" height="30" viewBox="0 0 30 30"><circle cx="15" cy="15" r="14.500" fill="#f3f3f3" stroke="#c6c6c6"/><path d="M6.500 8L15 17l8.500-9M15 16v11" fill="none" stroke="#d00d0d" stroke-width="3"/></svg></button>
    <button class="plain app-btn" aria-label="Alice"><svg width="30" height="30" viewBox="0 0 30 30"><circle cx="15" cy="15" r="15" fill="url(#g-alice)"/><path d="M15 7q2 0 4 4 3 5 3.500 8 0 3-7.500 3t-7.500-3Q8 16 11 11q2-4 4-4z" fill="#fff"/></svg></button>
    <button class="plain app-btn running" aria-label="uTorrent"><svg width="30" height="30" viewBox="0 0 30 30"><circle cx="15" cy="15" r="14.500" fill="#6bab45" stroke="#4b8a2c"/><path d="M8 8l4 11q2 4 6 2t3-5L18 5M20 14q2 8 9 5M9 12l4 17" fill="none" stroke="#fff" stroke-width="3.600"/></svg></button>
    <button class="plain app-btn running current" aria-label="Chrome"><svg width="30" height="30" viewBox="0 0 30 30"><circle cx="15" cy="15" r="14.500" fill="#fcc934"/><path d="M2.400 7.800A14.500 14.500 0 0 1 27.600 8H15L9 18z" fill="#ea4335"/><path d="M2.400 7.800L9.500 19l11-.5L15 29.500A14.500 14.500 0 0 1 2.400 7.800z" fill="#1e9e49"/><circle cx="15" cy="15" r="7" fill="#fff"/><circle cx="15" cy="15" r="5.400" fill="#2a72e8"/></svg></button>
    <button class="plain app-btn running" aria-label="Calculator"><svg width="30" height="30" viewBox="0 0 30 30"><rect x="4" width="23" height="30" rx="2" fill="#6f7a86"/><path d="M7 3h17v5H7z" fill="#3cd0f8"/><path d="M7 10.500h5v5H7zM13 10.500h5v5h-5zM19 10.500h5v5h-5zM7 16.500h5v5H7zM13 16.500h5v5h-5zM7 22.500h5v5H7zM13 22.500h5v5h-5z" fill="#dfe3e7"/><path d="M19 16.500h5v11h-5z" fill="#0d4a94"/></svg></button>
    <button class="plain app-btn running" aria-label="Notepad++"><svg width="30" height="30" viewBox="0 0 30 30"><path d="M3 2h19l3 26-23 1z" fill="#f6f8f2" stroke="#8a8a8a"/><path d="M3 19l21-2 1 11-22 1z" fill="#b5e640"/><path d="M5 14q4-6 8-2 6-4 7 2-1 9-8 8-8 0-7-8z" fill="#58b82e" stroke="#183d10"/><path d="M7 15h4M14 14h4M8 19q5 3 9-1" stroke="#122b0c" fill="none" stroke-width="1.300"/><path d="M29 2L21 24" stroke="#e39a2d" stroke-width="3"/><path d="M22 22l-2 5" stroke="#444"/></svg></button>
    <button class="plain app-btn running" aria-label="Word"><svg width="30" height="30" viewBox="0 0 30 30"><path d="M7 1h23v7H7z" fill="#41a5ee"/><path d="M7 8h23v7H7z" fill="#2b7cd3"/><path d="M7 15h23v7H7z" fill="#185abd"/><path d="M7 22h23v7H7z" fill="#103f91"/><rect y="7" width="16" height="16" rx="1.500" fill="#1653b4"/><text x="8" y="19" font-size="12">W</text></svg></button>
    <button class="plain app-btn running" aria-label="Scatter"><svg width="30" height="30" viewBox="0 0 30 30"><rect x=".7" y=".7" width="28.600" height="28.600" rx="3" fill="#151515" stroke="#888" stroke-width="1.400"/><g fill="#c8202c"><circle cx="15" cy="6" r="2.600"/><circle cx="10" cy="11" r="2.600"/><circle cx="4.500" cy="18" r="2.200"/><circle cx="9" cy="22" r="2.600"/></g><g fill="#e87480"><circle cx="19" cy="10" r="2.500"/><circle cx="14.500" cy="14" r="2.500"/><circle cx="19" cy="17" r="2.500"/></g><g fill="#fff"><circle cx="24" cy="14" r="2.500"/><circle cx="25" cy="20" r="2.500"/></g></svg></button>
    <button class="plain app-btn running" aria-label="Command Prompt"><svg width="30" height="30" viewBox="0 0 30 30"><rect x="1.500" y="3.500" width="27" height="22" fill="#050505" stroke="#9a9a9a"/><path d="M2 4h26v2H2z" fill="#c5c5c5"/><path d="M4 9.500h2M8 8l2 3M13 11h4" stroke="#eee"/></svg></button>
    <button class="plain app-btn running" aria-label="PuTTY"><svg width="30" height="30" viewBox="0 0 30 30"><use href="#i-monitor" x="12" y="0" width="18" height="15"/><use href="#i-monitor" x="0" y="15" width="18" height="15"/><path d="M20 9l-10 6 5 1-4 6 10-7-5-1z" fill="#ffe600" stroke="#6a6000" stroke-width=".6"/></svg></button>
    <button class="plain app-btn running" aria-label="Paint"><svg width="30" height="30" viewBox="0 0 30 30"><path d="M15 1q12 1 13 13 0 14-12 14-2 0-1-4 1-5-3-4-10 2-10-5Q4 2 15 1z" fill="#35b4ee"/><circle cx="15" cy="6" r="2.400" fill="#ffc01e"/><circle cx="9" cy="9" r="2.400" fill="#2fa048"/><circle cx="6" cy="15" r="2.400" fill="#e8502c"/><circle cx="15" cy="17" r="2" fill="#e6f5fc"/><path d="M20 10h5v6h-5z" fill="#e0b070"/><path d="M22.500 16v13" stroke="#a3601c" stroke-width="2.800"/></svg></button>
  </div>
  <div class="tray">
    <button class="plain" aria-label="Hidden icons"><svg width="14" height="14" viewBox="0 0 14 14"><path d="M1 10l6-6 6 6" fill="none" stroke="#222" stroke-width="1.800"/></svg></button>
    <svg class="tray-cloud" width="20" height="16" viewBox="0 0 20 16"><path d="M4 14.500q-4-1-3-5 1-3 4-3 2-5.500 7-4.500 4 1 4 5.500 4 1 3 4 0 3-3 3z" fill="#e4e4e4" stroke="#222" stroke-width="1.200"/><path d="M5 6.500q2-5 7-4 4 1 4 5l-5 3z" fill="#8d8d8d"/></svg>
    <span class="lang">ENG</span>
    <div class="status">
      <svg width="20" height="16" viewBox="0 0 20 16"><g fill="none" stroke="#222" stroke-width="1.300"><path d="M1 6q9-9 18 0" stroke="#a9b4b9"/><path d="M4 9q6-6 12 0M7 12q3-3 6 0"/></g><circle cx="10" cy="13.500" r="2" fill="#222"/></svg>
      <svg width="20" height="16" viewBox="0 0 20 16"><path d="M1 5.500h3.500L9 1.500v13l-4.500-4H1zM12 5q2 3 0 6M14.500 3q4 5 0 10M17 1q5 7 0 14" fill="none" stroke="#222" stroke-width="1.200"/></svg>
      <svg width="20" height="18" viewBox="0 0 20 18"><path d="M4 5h12q2 0 2 2v1h2v4h-2v2q0 2-2 2H3q-3 0-3-3V9z" fill="#222"/><path d="M4 7h12v7H3" fill="none" stroke="#d9ebf3"/><path d="M5 0L1 6h3l-2 5 6-7H5z" fill="#222" stroke="#d9ebf3" stroke-width=".7"/></svg>
    </div>
    <div class="clock"><span>12:54 AM</span><span>4/25/2022</span></div>
    <span class="notify">3</span>
  </div>
</footer>
</body>
</html>
```
FILE: styles.css
```css
* { box-sizing: border-box; }
body {
  margin: 0;
  min-height: 100vh;
  display: flex;
  flex-direction: column;
  background: #141414;
  color: #d8d9da;
  font: 15px/20px "Open Sans", "Noto Sans", sans-serif;
}
.defs { position: absolute; width: 0; height: 0; }
.plain {
  display: flex;
  align-items: center;
  justify-content: center;
  padding: 0;
  border: 0;
  background: none;
  color: inherit;
  font: inherit;
}
svg { flex: none; }

/* browser tab strip */
.tabstrip { display: flex; height: 43px; background: #dee1e6; padding-left: 11px; }
.tabs { flex: 1; display: flex; }
.tab-group { flex: 527 1 0; display: flex; }
.tab-group.wide { flex: 1047 1 0; }
.tab {
  flex: 1 1 0;
  display: flex;
  align-items: center;
  justify-content: center;
  background: linear-gradient(#80868b, #80868b) right center / 1px 25px no-repeat;
}
.tab.bare { background: none; }
.tab.active { background: #fff; border-radius: 9px 9px 0 0; }
.tab.pd { color: #77787a; font: bold 16px/20px "Liberation Sans", sans-serif; }
.tab.pd b { color: #b01616; }
.fav { width: 20px; height: 20px; color: #000; }
.fav.soft { color: #3a3a3a; }
.fav text { font-size: 7px; font-weight: bold; fill: #fff; text-anchor: middle; }
.new-tab { width: 54px; }
.window-buttons { display: flex; width: 282px; padding: 0 1px 5px 53px; }
.window-buttons .plain { width: 57px; }

/* address bar */
.toolbar {
  display: flex;
  align-items: center;
  height: 46px;
  background: #fff;
  border-bottom: 1px solid #c9cbce;
}
.nav-buttons { display: flex; width: 135px; padding-left: 8px; }
.nav-buttons .plain { width: 40px; height: 34px; }
.omnibox {
  flex: 1;
  display: flex;
  align-items: center;
  height: 35px;
  padding-left: 15px;
  border-radius: 18px;
  background: #f1f3f4;
  font-size: 16px;
  color: #5f6368;
}
.secure { margin-left: 12px; width: 86px; white-space: nowrap; }
.divider { width: 2px; height: 20px; margin: 0 5px 0 8px; background: #9aa0a6; }
.url-field { flex: 1; position: relative; }
.url {
  width: 100%;
  height: 28px;
  padding: 0 0 0 192px;
  border: 0;
  outline: 0;
  font: inherit;
  color: transparent;
  background: linear-gradient(90deg, #202124 419px, #63676c 419px);
  -webkit-background-clip: text;
  background-clip: text;
}
.smudge { position: absolute; left: 0; top: 2px; }
.omni-actions, .extensions { display: flex; align-items: center; }
.omni-actions .plain, .extensions .plain { width: 40px; height: 34px; }
.omni-actions { padding-right: 2px; }
.extensions { padding: 0 8px; }
.extensions .avatar {
  width: 28px;
  height: 28px;
  margin: 0 6px;
  border-radius: 50%;
  background: #004d40;
  color: #fff;
}

/* dashboard header */
.app { flex: 1; }
.navbar { display: flex; height: 65px; background: #292929; }
.navbar .plain { padding-top: 1px; }
.brand { width: 98px; gap: 4px; background: #333; border-right: 1px solid #0a0a0a; }
.dash-title { width: 294px; gap: 9px; background: #333; border-right: 1px solid #0a0a0a; }
.navbar .dash-title { padding-left: 3px; }
.title-text { font-size: 22px; }
.caret { border: 4px solid transparent; border-top-color: #d8d9da; border-bottom: 0; }
.caret.low { margin-top: 8px; }
.dash-actions { display: flex; margin-left: 2px; }
.dash-actions .plain { width: 50px; }
.time-controls { display: flex; margin-left: auto; padding-right: 33px; }
.time-controls .zoom { padding: 2px 17px 0; }
.range { gap: 6px; margin-left: 26px; font-size: 17px; white-space: nowrap; }
.refresh { margin-left: 43px; }

/* panels */
.row { display: grid; grid-template-columns: 14px 1fr; padding: 15px 14px 0 0; }
.row-handle { flex-direction: column; justify-content: flex-start; gap: 2px; padding-top: 7px; }
.row-handle i { width: 5px; height: 5px; background: #444; border-radius: 1px; }
.panels { display: grid; grid-template-columns: 1fr 1fr; gap: 14px; }
.panel {
  position: relative;
  min-width: 0;
  height: 383px;
  border: 1px solid #292929;
  background: #1f1d1e;
}
.panel-title { margin: 9px 0 14px; font-size: 17px; line-height: 20px; font-weight: 600; text-align: center; }
.chart { display: grid; grid-template-columns: 51px 1fr; padding-right: 32px; }
.memory .chart { grid-template-columns: 63px 1fr; }
.y-axis {
  display: flex;
  flex-direction: column;
  justify-content: space-between;
  margin: -12px 0 -9px;
  padding-right: 8px;
  text-align: right;
}
.plot { display: block; width: 100%; height: 270px; overflow: visible; }
.plot path { vector-effect: non-scaling-stroke; }
.area { fill: rgba(126, 178, 109, .1); }
.grid { fill: none; stroke: rgba(255, 255, 255, .22); shape-rendering: crispEdges; }
.line { fill: none; stroke: #7eb26d; stroke-width: 1px; stroke-linejoin: round; }
.x-axis { grid-column: 2; display: flex; margin: 7px -26px 0 0; }
.x-axis span { flex: 1 1 0; text-align: center; }
.legend { display: flex; align-items: center; gap: 5px; margin: 10px 0 0 43px; }
.legend i { width: 16px; height: 4px; background: #7eb26d; border-radius: 1px; }
.legend a { color: inherit; text-decoration: none; }
.resize { position: absolute; right: 0; bottom: 1px; }
.add-row {
  gap: 4px;
  height: 31px;
  margin: 13px 0 0 21px;
  padding: 0 11px 1px;
  border-radius: 2px;
  background: linear-gradient(#292929, #333);
  box-shadow: 0 1px 1px #000;
}

/* taskbar */
.taskbar {
  display: flex;
  height: 60px;
  padding-bottom: 2px;
  border-top: 1px solid #a4adb2;
  background: linear-gradient(90deg, #e0e8ea, #dfe6ec 14%, #d6eaf3 32%, #d8ebf4 80%, #dfe9f2);
  color: #1b1b1b;
  font-size: 14px;
}
.weather { width: 324px; justify-content: flex-start; gap: 9px; padding-left: 25px; }
.weather-text { display: flex; flex-direction: column; align-items: flex-start; }
.dim { color: #5b6063; }
.task-apps { display: flex; }
.task-apps text { font-weight: bold; fill: #fff; text-anchor: middle; }
.app-btn { position: relative; width: 55px; }
.app-btn.running::after {
  content: "";
  position: absolute;
  bottom: 4px;
  left: 24px;
  width: 8px;
  height: 4px;
  border-radius: 2px;
  background: #80888c;
}
.app-btn.current { width: 49px; height: 49px; margin: 5px 3px; border-radius: 4px; background: #ecf4fa; }
.app-btn.current::after { left: 15px; bottom: 0; width: 20px; background: #24808e; }
.count {
  position: absolute;
  left: 28px;
  top: 8px;
  width: 20px;
  height: 20px;
  border-radius: 50%;
  background: #24808e;
  color: #fff;
}
.check { position: absolute; left: 33px; top: 8px; line-height: 0; }
.tray { display: flex; align-items: center; margin-left: auto; padding-right: 25px; }
.tray-cloud { margin-left: 23px; }
.lang { margin-left: 23px; }
.status { display: flex; align-items: center; gap: 10px; margin-left: 23px; }
.clock { display: flex; flex-direction: column; width: 90px; text-align: right; }
.notify {
  width: 20px;
  height: 20px;
  margin-left: 10px;
  border-radius: 50%;
  background: #24707c;
  color: #fff;
  text-align: center;
}
```
